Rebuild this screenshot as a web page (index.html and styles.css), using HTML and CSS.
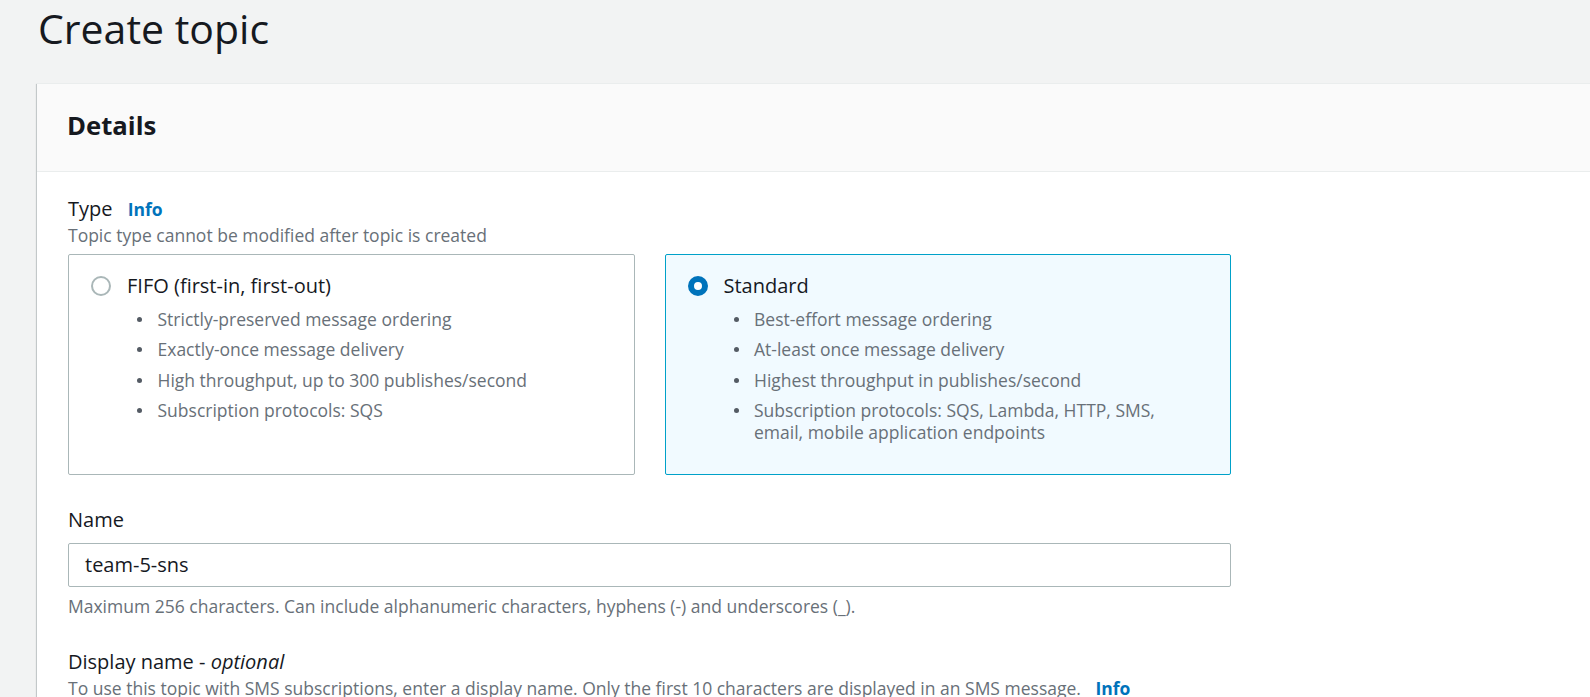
FILE: index.html
```html
<!DOCTYPE html>
<html lang="en">
<head>
<meta charset="utf-8">
<title>Create topic</title>
<link rel="stylesheet" href="styles.css">
</head>
<body>
<div class="page">
  <h1 class="page-title">Create topic</h1>
  <section class="container">
    <header class="container-header">
      <h2>Details</h2>
    </header>
    <div class="container-body">
      <div class="field">
        <div class="label">Type <a class="info" href="#">Info</a></div>
        <div class="desc">Topic type cannot be modified after topic is created</div>
        <div class="tiles">
          <div class="tile">
            <div class="tile-head">
              <span class="radio"></span>
              <span class="tile-title">FIFO (first-in, first-out)</span>
            </div>
            <ul class="tile-list">
              <li>Strictly-preserved message ordering</li>
              <li>Exactly-once message delivery</li>
              <li>High throughput, up to 300 publishes/second</li>
              <li>Subscription protocols: SQS</li>
            </ul>
          </div>
          <div class="tile selected">
            <div class="tile-head">
              <span class="radio checked"></span>
              <span class="tile-title">Standard</span>
            </div>
            <ul class="tile-list">
              <li>Best-effort message ordering</li>
              <li>At-least once message delivery</li>
              <li>Highest throughput in publishes/second</li>
              <li>Subscription protocols: SQS, Lambda, HTTP, SMS, email, mobile application endpoints</li>
            </ul>
          </div>
        </div>
      </div>

      <div class="field field-name">
        <div class="label">Name</div>
        <div class="input">team-5-sns</div>
        <div class="hint">Maximum 256 characters. Can include alphanumeric characters, hyphens (-) and underscores (_).</div>
      </div>

      <div class="field field-display">
        <div class="label">Display name - <em>optional</em></div>
        <div class="desc">To use this topic with SMS subscriptions, enter a display name. Only the first 10 characters are displayed in an SMS message. <a class="info info-inline" href="#">Info</a></div>
      </div>
    </div>
  </section>
</div>
</body>
</html>
```
FILE: styles.css
```css
html, body {
  margin: 0;
  padding: 0;
}

body {
  background: #f2f3f3;
  font-family: "Open Sans", "Noto Sans", sans-serif;
  color: #16191f;
  overflow: hidden;
}

.page {
  padding: 0 0 0 37px;
}

.page-title {
  margin: 0 0 27px 1px;
  font-size: 41px;
  line-height: 56px;
  font-weight: 400;
  color: #16191f;
}

.container {
  background: #ffffff;
  margin-right: -10px;
  box-shadow: 0 1px 1px 0 rgba(0, 28, 36, 0.3), 1px 1px 1px 0 rgba(0, 28, 36, 0.15), -1px 1px 1px 0 rgba(0, 28, 36, 0.15);
  border-top: 1px solid #eaeded;
}

.container-header {
  background: #fafafa;
  border-bottom: 1px solid #eaeded;
  padding: 25px 30px 28px 30px;
}

.container-header h2 {
  margin: 0;
  font-size: 25.7px;
  line-height: 34px;
  font-weight: 700;
  color: #16191f;
}

.container-body {
  padding: 23px 30px 40px 31px;
  max-width: 1163px;
}

.label {
  font-size: 20px;
  line-height: 28px;
  color: #16191f;
}

.label em {
  font-style: italic;
}

.info {
  font-size: 17.5px;
  font-weight: 700;
  color: #0073bb;
  text-decoration: none;
  margin-left: 10px;
}

.info-inline {
  margin-left: 10px;
}

.desc, .hint {
  font-size: 17.5px;
  line-height: 24px;
  color: #687078;
}

.tiles {
  margin-top: 7px;
  display: grid;
  grid-template-columns: 1fr 1fr;
  column-gap: 30px;
}

.tile {
  border: 1px solid #aab7b8;
  border-radius: 2px;
  padding: 17px 40px 31px 22px;
  background: #ffffff;
}

.tile.selected {
  border-color: #00a1c9;
  background: #f1faff;
}

.tile-head {
  display: flex;
  align-items: center;
  gap: 16px;
}

.radio {
  box-sizing: border-box;
  width: 20px;
  height: 20px;
  border-radius: 50%;
  border: 2px solid #aab7b8;
  background: #ffffff;
  flex: none;
}

.radio.checked {
  border: 6.5px solid #0073bb;
  background: #ffffff;
}

.tile-title {
  font-size: 20px;
  line-height: 28px;
  color: #16191f;
}

.tile-list {
  list-style: none;
  margin: 8px 0 0 46px;
  padding: 0;
}

.tile-list li {
  display: flex;
  align-items: flex-start;
  font-size: 17.5px;
  line-height: 22px;
  color: #687078;
  margin-bottom: 8.4px;
}

.tile-list li:last-child {
  margin-bottom: 0;
}

.tile-list li::before {
  content: "";
  flex: none;
  width: 5px;
  height: 5px;
  border-radius: 50%;
  background: #545b64;
  margin: 9px 15.5px 0 0;
}

.field-name {
  margin-top: 30.5px;
}

.input {
  margin-top: 9px;
  box-sizing: border-box;
  height: 44px;
  border: 1px solid #aab7b8;
  border-radius: 2px;
  padding: 0 16px;
  display: flex;
  align-items: center;
  font-size: 20px;
  color: #16191f;
  background: #ffffff;
}

.hint {
  margin-top: 7px;
}

.field-display {
  margin-top: 30px;
}
```
